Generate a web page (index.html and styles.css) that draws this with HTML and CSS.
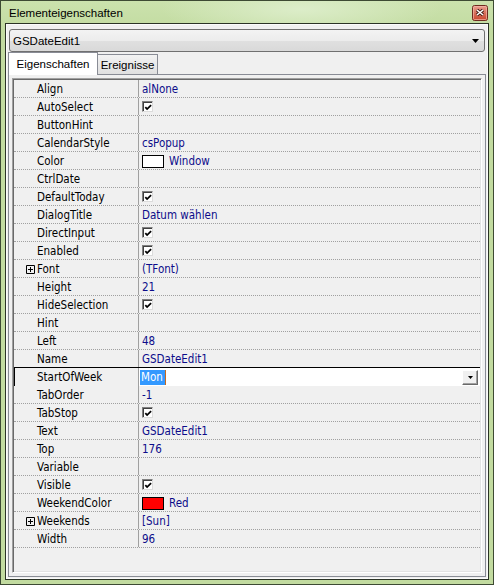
FILE: index.html
```html
<!DOCTYPE html>
<html lang="de">
<head>
    <meta charset="UTF-8">
    <title>Elementeigenschaften</title>
    <link rel="stylesheet" href="styles.css">
</head>
<body>

<div class="window">
    <!-- Title bar -->
    <div class="titlebar">
        <span class="title">Elementeigenschaften</span>
        <span class="close">
            <svg width="16" height="16" viewBox="0 0 16 16">
                <defs>
                    <linearGradient id="closeFill" x1="0" y1="0" x2="0" y2="1">
                        <stop offset="0" stop-color="#eda394"/>
                        <stop offset="0.5" stop-color="#d8705c"/>
                        <stop offset="1" stop-color="#c8452c"/>
                    </linearGradient>
                </defs>
                <rect x="0.5" y="0.5" width="15" height="15" rx="2" fill="url(#closeFill)" stroke="#6e2a1e"/>
                <rect x="1.5" y="1.5" width="13" height="13" rx="1" fill="none" stroke="#f3b8aa" stroke-opacity="0.7"/>
                <path d="M5 5l6 5M11 5l-6 5" stroke="#3a1810" stroke-width="3.2"/>
                <path d="M5 5l6 5M11 5l-6 5" stroke="#fff" stroke-width="1.6"/>
            </svg>
        </span>
    </div>

    <div class="client">
        <!-- Component selector -->
        <div class="combo">
            <span>GSDateEdit1</span>
            <svg width="7" height="4" viewBox="0 0 7 4"><path d="M0 0h7L3.5 4z" fill="#000"/></svg>
        </div>

        <!-- Tabs -->
        <div class="tabs">
            <div class="tab active">Eigenschaften</div>
            <div class="tab">Ereignisse</div>
        </div>

        <div class="page">
            <div class="grid">
                <div class="row"><div class="name">Align</div><div class="value">alNone</div></div>
                <div class="row"><div class="name">AutoSelect</div><div class="value"><span class="check"><svg width="9" height="9" viewBox="0 0 9 9"><path d="M1.5 4l2 2.2L8 1.8" stroke="#000" stroke-width="2" fill="none"/></svg></span></div></div>
                <div class="row"><div class="name">ButtonHint</div><div class="value"></div></div>
                <div class="row"><div class="name">CalendarStyle</div><div class="value">csPopup</div></div>
                <div class="row"><div class="name">Color</div><div class="value"><span class="swatch swatch-window"></span>Window</div></div>
                <div class="row"><div class="name">CtrlDate</div><div class="value"></div></div>
                <div class="row"><div class="name">DefaultToday</div><div class="value"><span class="check"><svg width="9" height="9" viewBox="0 0 9 9"><path d="M1.5 4l2 2.2L8 1.8" stroke="#000" stroke-width="2" fill="none"/></svg></span></div></div>
                <div class="row"><div class="name">DialogTitle</div><div class="value">Datum wählen</div></div>
                <div class="row"><div class="name">DirectInput</div><div class="value"><span class="check"><svg width="9" height="9" viewBox="0 0 9 9"><path d="M1.5 4l2 2.2L8 1.8" stroke="#000" stroke-width="2" fill="none"/></svg></span></div></div>
                <div class="row"><div class="name">Enabled</div><div class="value"><span class="check"><svg width="9" height="9" viewBox="0 0 9 9"><path d="M1.5 4l2 2.2L8 1.8" stroke="#000" stroke-width="2" fill="none"/></svg></span></div></div>
                <div class="row"><div class="name expand"><svg class="plus" width="9" height="9" viewBox="0 0 9 9"><path d="M.5.5h8v8h-8zM2 4.5h5M4.5 2v5" stroke="#000" fill="none"/></svg>Font</div><div class="value">(TFont)</div></div>
                <div class="row"><div class="name">Height</div><div class="value">21</div></div>
                <div class="row"><div class="name">HideSelection</div><div class="value"><span class="check"><svg width="9" height="9" viewBox="0 0 9 9"><path d="M1.5 4l2 2.2L8 1.8" stroke="#000" stroke-width="2" fill="none"/></svg></span></div></div>
                <div class="row"><div class="name">Hint</div><div class="value"></div></div>
                <div class="row"><div class="name">Left</div><div class="value">48</div></div>
                <div class="row"><div class="name">Name</div><div class="value">GSDateEdit1</div></div>
                <div class="row active">
                    <div class="name">StartOfWeek</div>
                    <div class="value">
                        <span class="selection">Mon</span><span class="caret"></span>
                        <span class="dropbtn"><svg width="5" height="3" viewBox="0 0 5 3"><path d="M0 0h5L2.5 3z" fill="#000"/></svg></span>
                    </div>
                </div>
                <div class="row"><div class="name">TabOrder</div><div class="value">-1</div></div>
                <div class="row"><div class="name">TabStop</div><div class="value"><span class="check"><svg width="9" height="9" viewBox="0 0 9 9"><path d="M1.5 4l2 2.2L8 1.8" stroke="#000" stroke-width="2" fill="none"/></svg></span></div></div>
                <div class="row"><div class="name">Text</div><div class="value">GSDateEdit1</div></div>
                <div class="row"><div class="name">Top</div><div class="value">176</div></div>
                <div class="row"><div class="name">Variable</div><div class="value"></div></div>
                <div class="row"><div class="name">Visible</div><div class="value"><span class="check"><svg width="9" height="9" viewBox="0 0 9 9"><path d="M1.5 4l2 2.2L8 1.8" stroke="#000" stroke-width="2" fill="none"/></svg></span></div></div>
                <div class="row"><div class="name">WeekendColor</div><div class="value"><span class="swatch swatch-red"></span>Red</div></div>
                <div class="row"><div class="name expand"><svg class="plus" width="9" height="9" viewBox="0 0 9 9"><path d="M.5.5h8v8h-8zM2 4.5h5M4.5 2v5" stroke="#000" fill="none"/></svg>Weekends</div><div class="value">[Sun]</div></div>
                <div class="row"><div class="name">Width</div><div class="value">96</div></div>
            </div>
        </div>
    </div>
</div>

</body>
</html>
```

FILE: styles.css
```css
/* Window frame */
* {
    box-sizing: border-box;
}

body {
    margin: 0;
    background: #c3dca2;
}

.window {
    width: 494px;
    height: 585px;
    display: flex;
    flex-direction: column;
    border: 1px solid #3d4a33;
    background:
        radial-gradient(ellipse 140px 30px at 300px 8px, #dcedc9, rgba(220, 237, 201, 0)),
        linear-gradient(#cbe2ad, #c2dba0 30px);
}

/* Title bar */
.titlebar {
    height: 22px;
    display: flex;
    align-items: center;
    justify-content: space-between;
    padding: 1px 5px 0 8px;
}

.title {
    font-family: "Liberation Sans", Arial, sans-serif;
    font-size: 11.5px;
    color: #000;
}

.close {
    display: flex;
    width: 16px;
    height: 16px;
}

/* Client area */
.client {
    flex: 1;
    margin: 0 4px 4px;
    border: 1px solid #2b3326;
    box-shadow: inset 0 0 0 1px #fbfbfb;
    background: #f0f0f0;
    display: flex;
    flex-direction: column;
}

/* Component selector */
.combo {
    margin: 5px 3px 0;
    height: 23px;
    display: flex;
    align-items: center;
    justify-content: space-between;
    padding: 0 5px 0 3px;
    border: 1px solid #707070;
    border-radius: 3px;
    background: linear-gradient(#f3f3f3, #ececec 50%, #e0e0e0 51%, #d9d9d9);
    font-family: "Liberation Sans", Arial, sans-serif;
    font-size: 11.5px;
    color: #000;
}

/* Tabs */
.tabs {
    position: relative;
    z-index: 1;
    display: flex;
    align-items: flex-end;
    height: 22px;
    margin: 0 2px;
}

.tab {
    display: flex;
    align-items: center;
    justify-content: center;
    height: 20px;
    width: 61px;
    margin-left: -1px;
    padding-top: 1px;
    border: 1px solid #898c95;
    border-bottom: none;
    background: linear-gradient(#f3f3f3, #e9e9e9 50%, #e0e0e0);
    font-family: "Liberation Sans", Arial, sans-serif;
    font-size: 11.5px;
    color: #000;
}

.tab.active {
    height: 23px;
    width: 90px;
    margin-left: 0;
    margin-bottom: -1px;
    padding-top: 0;
    padding-bottom: 1px;
    background: #fff;
}

/* Tab page */
.page {
    flex: 1;
    display: flex;
    margin: 0 2px 2px;
    padding: 3px;
    border: 1px solid #898c95;
}

/* Property grid */
.grid {
    flex: 1;
    padding: 1px;
    border: 1px solid;
    border-color: #a0a0a0 #fff #fff #a0a0a0;
    box-shadow: inset 1px 1px 0 #696969, inset -1px -1px 0 #e3e3e3;
    font-family: "DejaVu Sans Condensed", "DejaVu Sans", sans-serif;
    font-stretch: condensed;
    font-size: 11.5px;
    line-height: 16px;
}

.row {
    display: flex;
    height: 18px;
    border-bottom: 1px dotted #a0a0a0;
}

.name {
    width: 125px;
    padding: 1px 0 0 23px;
    border-right: 1px solid #a0a0a0;
    color: #000;
    white-space: nowrap;
}

.name.expand {
    display: flex;
    align-items: center;
    padding-left: 12px;
}

.plus {
    margin-right: 2px;
}

.value {
    flex: 1;
    display: flex;
    align-items: center;
    padding: 1px 0 0 3px;
    color: #0c0c8a;
    white-space: nowrap;
}

.check {
    display: flex;
    align-items: center;
    justify-content: center;
    width: 11px;
    height: 11px;
    margin-top: -1px;
    border: 1px solid;
    border-color: #808080 #dcdcdc #dcdcdc #808080;
    box-shadow: inset 1px 1px 0 #404040;
    background: #fff;
    padding: 1px 0 0 1px;
}

.swatch {
    width: 22px;
    height: 13px;
    margin-right: 5px;
    border: 1px solid #000;
}

.swatch-window {
    background: #fff;
}

.swatch-red {
    background: #ff0000;
}

/* Row being edited */
.row.active {
    height: 19px;
    margin-top: -1px;
    border-top: 1px solid #000;
    border-bottom: none;
}

.row.active .name {
    border-left: 1px solid #000;
    padding-left: 22px;
}

.row.active .value {
    background: #fff;
    padding: 0 0 0 1px;
}

.selection {
    background: #3399ff;
    color: #fff;
    line-height: 15px;
    padding: 0 2px 0 1px;
}

.caret {
    width: 1px;
    height: 15px;
    background: #c86a1e;
}

.dropbtn {
    display: flex;
    align-items: center;
    justify-content: center;
    width: 16px;
    height: 15px;
    margin-left: auto;
    margin-right: 2px;
    border: 1px solid;
    border-color: #fff #696969 #696969 #fff;
    box-shadow: inset -1px -1px 0 #a0a0a0;
    background: #f0f0f0;
}
```
